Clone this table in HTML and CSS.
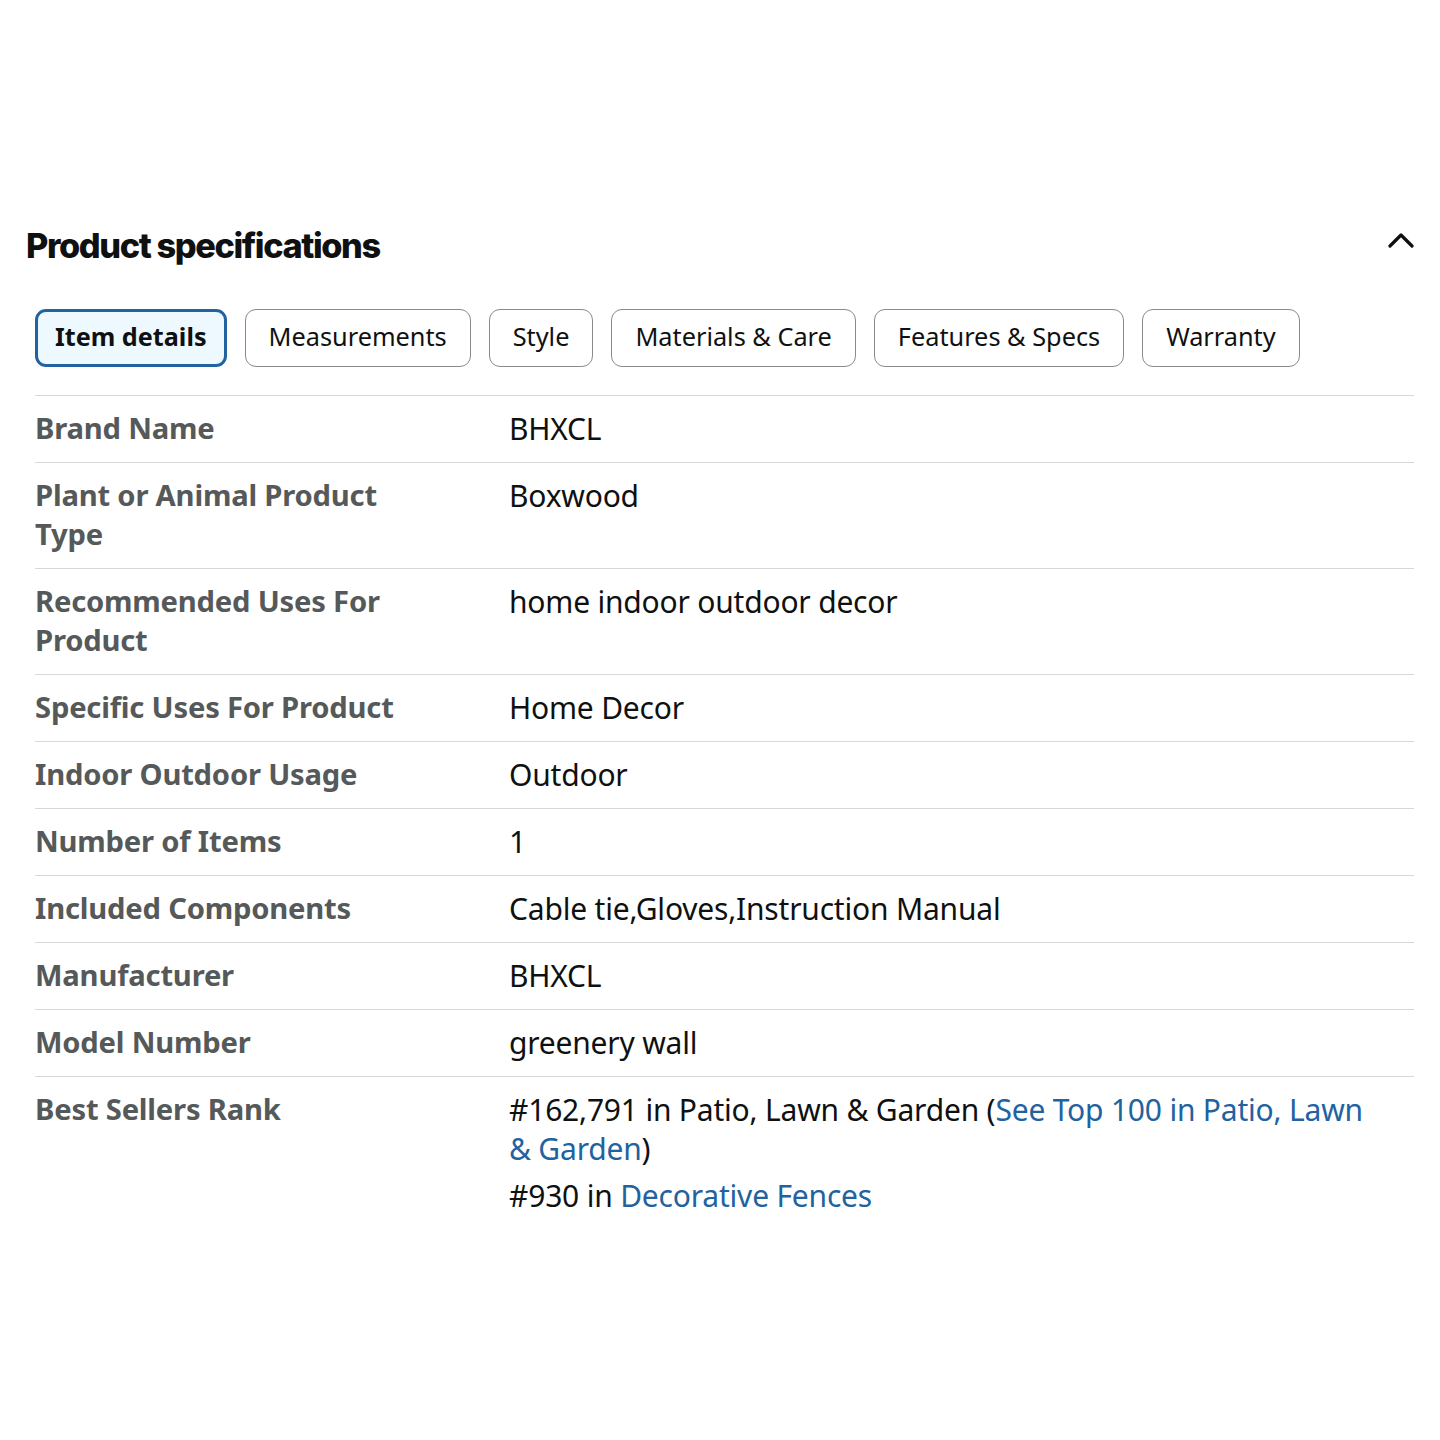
FILE: index.html
```html
<!DOCTYPE html>
<html lang="en">
<head>
<meta charset="utf-8">
<title>Product specifications</title>
<link rel="stylesheet" href="styles.css">
</head>
<body>
<div class="page">
  <section class="specs">
    <div class="specs-header">
      <h2 class="specs-title">Product specifications</h2>
      <svg class="chevron" width="26" height="18" viewBox="0 0 26 18" aria-hidden="true">
        <polyline points="2,15 13,4 24,15" fill="none" stroke="#0f1111" stroke-width="3.2" stroke-linecap="round" stroke-linejoin="round"/>
      </svg>
    </div>
    <div class="tabs">
      <button class="tab tab-active">Item details</button>
      <button class="tab">Measurements</button>
      <button class="tab">Style</button>
      <button class="tab">Materials &amp; Care</button>
      <button class="tab">Features &amp; Specs</button>
      <button class="tab">Warranty</button>
    </div>
    <table class="spec-table">
      <tr><th>Brand Name</th><td>BHXCL</td></tr>
      <tr><th>Plant or Animal Product Type</th><td>Boxwood</td></tr>
      <tr><th>Recommended Uses For Product</th><td>home indoor outdoor decor</td></tr>
      <tr><th>Specific Uses For Product</th><td>Home Decor</td></tr>
      <tr><th>Indoor Outdoor Usage</th><td>Outdoor</td></tr>
      <tr><th>Number of Items</th><td>1</td></tr>
      <tr><th>Included Components</th><td>Cable tie,Gloves,Instruction Manual</td></tr>
      <tr><th>Manufacturer</th><td>BHXCL</td></tr>
      <tr><th>Model Number</th><td>greenery wall</td></tr>
      <tr class="last">
        <th>Best Sellers Rank</th>
        <td>
          <ul class="rank-list">
            <li>#162,791 in Patio, Lawn &amp; Garden (<a href="#">See Top 100 in Patio, Lawn &amp; Garden</a>)</li>
            <li>#930 in <a href="#">Decorative Fences</a></li>
          </ul>
        </td>
      </tr>
    </table>
  </section>
</div>
</body>
</html>
```

FILE: styles.css
```css
html, body {
  margin: 0;
  padding: 0;
  background: #ffffff;
}

body {
  font-family: "Noto Sans", "Open Sans", Arial, sans-serif;
  color: #0f1111;
}

.page {
  padding: 223px 26px 0 26px;
}

.specs-header {
  display: flex;
  align-items: center;
  justify-content: space-between;
  height: 46px;
}

.specs-title {
  margin: 0;
  font-family: Inter, "Noto Sans", sans-serif;
  font-weight: 800;
  font-size: 34.3px;
  letter-spacing: -1.4px;
  line-height: 46px;
  color: #0f1111;
}

.chevron {
  display: block;
  margin-top: -13px;
}

.tabs {
  display: flex;
  gap: 18px;
  margin: 40px 0 0 9px;
}

.tab {
  font-family: "Noto Sans", "Open Sans", Arial, sans-serif;
  font-size: 25.3px;
  color: #0f1111;
  background: #ffffff;
  border: 1px solid #888c8c;
  border-radius: 11px;
  height: 58px;
  padding: 0 23px 2px 23px;
  line-height: 1;
}

.tab-active {
  background: #edf8ff;
  border: 3px solid #2162a1;
  font-weight: 700;
  font-size: 25.2px;
  padding: 0 17px 2px 17px;
}

.spec-table {
  width: calc(100% - 9px);
  margin: 28px 0 0 9px;
  border-collapse: collapse;
  font-size: 30px;
  letter-spacing: -0.2px;
  line-height: 39px;
}

.spec-table tr {
  border-top: 1px solid #d5d9d9;
}

.spec-table th,
.spec-table td {
  text-align: left;
  vertical-align: top;
  padding: 13px 0 14px 0;
}

.spec-table th {
  width: 400px;
  padding-right: 74px;
  font-size: 29.2px;
  font-weight: 700;
  color: #565959;
}

.spec-table td {
  font-weight: 400;
  color: #0f1111;
  padding-right: 30px;
}

.rank-list {
  list-style: none;
  margin: 0;
  padding: 0;
}

.rank-list li + li {
  margin-top: 8px;
}

.rank-list a {
  color: #2162a1;
  text-decoration: none;
}
```
